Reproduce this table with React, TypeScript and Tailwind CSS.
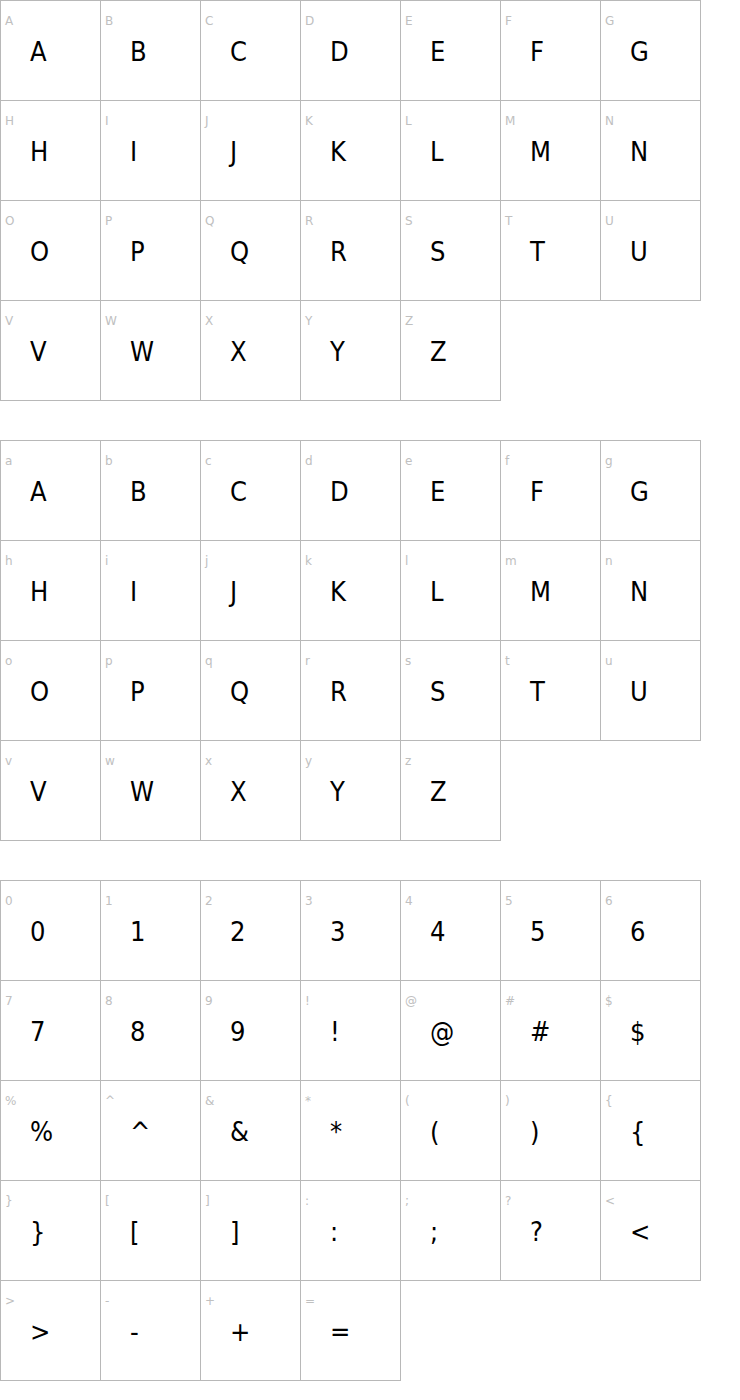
import React from "react";

const upper = "ABCDEFGHIJKLMNOPQRSTUVWXYZ".split("");
const lower = "abcdefghijklmnopqrstuvwxyz".split("");
const sym = ["0","1","2","3","4","5","6","7","8","9","!","@","#","$","%","^","&","*","(",")","{","}","[","]",":",";","?","<",">","-","+","="];

function Cell({ label, glyph }: { label: string; glyph: string }) {
  return (
    <div className="relative w-[101px] h-[101px] border border-[#b8b8b8] -mr-px -mb-px bg-white">
      <div
        className="absolute left-[4px] top-[13px] text-[12px] leading-[14px] text-[#c0c0c0]"
        style={{ fontFamily: '"DejaVu Sans", sans-serif' }}
      >
        {label}
      </div>
      <div
        className="absolute left-[29px] top-[33px] text-[27px] leading-[36px] text-black"
        style={{ fontFamily: '"DejaVu Sans Condensed", "DejaVu Sans", sans-serif', fontStretch: "condensed" }}
      >
        {glyph}
      </div>
    </div>
  );
}

function Section({ items, className }: { items: { label: string; glyph: string }[]; className?: string }) {
  return (
    <div className={"flex flex-wrap w-[701px] " + (className ?? "")}>
      {items.map((it, i) => (
        <Cell key={i} label={it.label} glyph={it.glyph} />
      ))}
    </div>
  );
}

export default function App() {
  return (
    <div className="bg-white w-[740px] min-h-[1400px]">
      <Section items={upper.map((c) => ({ label: c, glyph: c }))} />
      <Section className="mt-[40px]" items={lower.map((c) => ({ label: c, glyph: c.toUpperCase() }))} />
      <Section className="mt-[40px]" items={sym.map((c) => ({ label: c, glyph: c }))} />
    </div>
  );
}
